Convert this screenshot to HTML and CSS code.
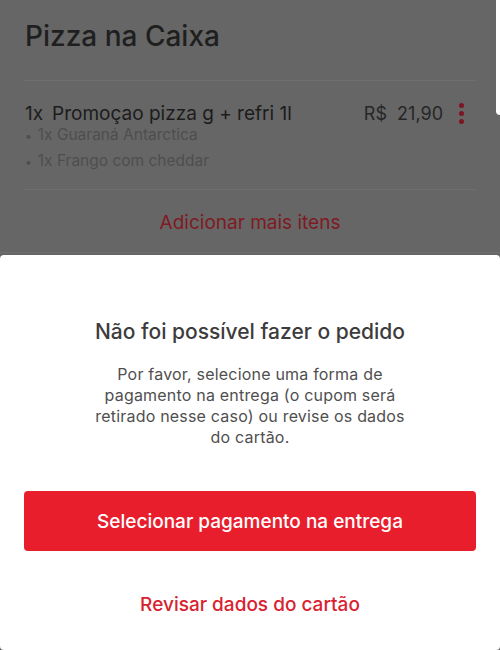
FILE: index.html
```html
<!DOCTYPE html>
<html lang="pt-BR">
<head>
    <meta charset="UTF-8">
    <meta name="viewport" content="width=device-width, initial-scale=1.0">
    <title>Pizza na Caixa</title>
    <link rel="stylesheet" href="styles.css">
</head>
<body>
    <div class="edge"></div>

    <div class="order">
        <h1 class="store">Pizza na Caixa</h1>
        <div class="item">
            <div class="item-main">
                <span class="item-name"><span class="qty">1x</span>Promoçao pizza g + refri 1l</span>
                <span class="item-price">R$&nbsp; 21,90</span>
                <span class="more"><i></i><i></i><i></i></span>
            </div>
            <ul class="extras">
                <li>1x Guaraná Antarctica</li>
                <li>1x Frango com cheddar</li>
            </ul>
        </div>
        <div class="add-more">Adicionar mais itens</div>
    </div>

    <div class="sheet">
        <h2>Não foi possível fazer o pedido</h2>
        <p>Por favor, selecione uma forma de pagamento na entrega (o cupom será retirado nesse caso) ou revise os dados do cartão.</p>
        <button class="primary">Selecionar pagamento na entrega</button>
        <button class="link">Revisar dados do cartão</button>
    </div>
</body>
</html>
```

FILE: styles.css
```css
html, body {
    margin: 0;
    height: 100%;
}
body {
    background: #666666;
    font-family: "Inter", "Open Sans", sans-serif;
    display: flex;
    flex-direction: column;
    overflow: hidden;
}
.edge {
    position: absolute;
    top: 0;
    right: 0;
    width: 4px;
    height: 115px;
    background: #ffffff;
    border-bottom-left-radius: 4px;
}
.order {
    padding: 0 24px;
    height: 252px;
    border-bottom: 1px solid #6e6e6e;
}
.store {
    margin: 0;
    padding: 19px 1px 0;
    height: 61px;
    font-size: 28px;
    font-weight: 500;
    color: #1f1f1f;
    border-bottom: 1px solid #6e6e6e;
}
.item {
    padding: 21px 0 15px;
    border-bottom: 1px solid #6e6e6e;
}
.item-main {
    display: flex;
    align-items: center;
    font-size: 19px;
    color: #1c1c1c;
    padding-left: 1px;
}
.qty {
    margin-right: 9px;
}
.item-name {
    flex: 1;
}
.item-price {
    margin-right: 16px;
    font-size: 18px;
    color: #262626;
}
.more {
    display: flex;
    flex-direction: column;
    gap: 3px;
    margin-right: 12px;
}
.more i {
    width: 5px;
    height: 5px;
    border-radius: 50%;
    background: #7c1520;
}
.extras {
    list-style: none;
    margin: -3px 0 0;
    padding: 0 0 0 1px;
    font-size: 15.5px;
    color: #4e4e4e;
    line-height: 25px;
}
.extras li::before {
    content: "\2022";
    margin-right: 6px;
    font-size: 12px;
}
.add-more {
    text-align: center;
    font-size: 19px;
    color: #7f1a23;
    padding-top: 21px;
}
.sheet {
    flex: 1;
    background: #ffffff;
    border-radius: 4px;
    margin-top: 2px;
    display: flex;
    flex-direction: column;
    align-items: center;
    padding: 64px 24px 0;
}
.sheet h2 {
    margin: 0;
    font-size: 21px;
    font-weight: 500;
    color: #3d3c3c;
}
.sheet p {
    margin: 20px 0 0;
    width: 326px;
    text-align: center;
    font-size: 16px;
    letter-spacing: 0.2px;
    line-height: 21px;
    color: #4f4f4f;
}
.primary {
    margin-top: 43px;
    width: 100%;
    height: 60px;
    border: none;
    border-radius: 4px;
    background: #e81e2d;
    color: #ffffff;
    font-family: inherit;
    font-size: 19px;
    font-weight: 500;
}
.link {
    margin-top: 41px;
    border: none;
    background: none;
    color: #d9222f;
    font-family: inherit;
    font-size: 19px;
    font-weight: 500;
}
```
